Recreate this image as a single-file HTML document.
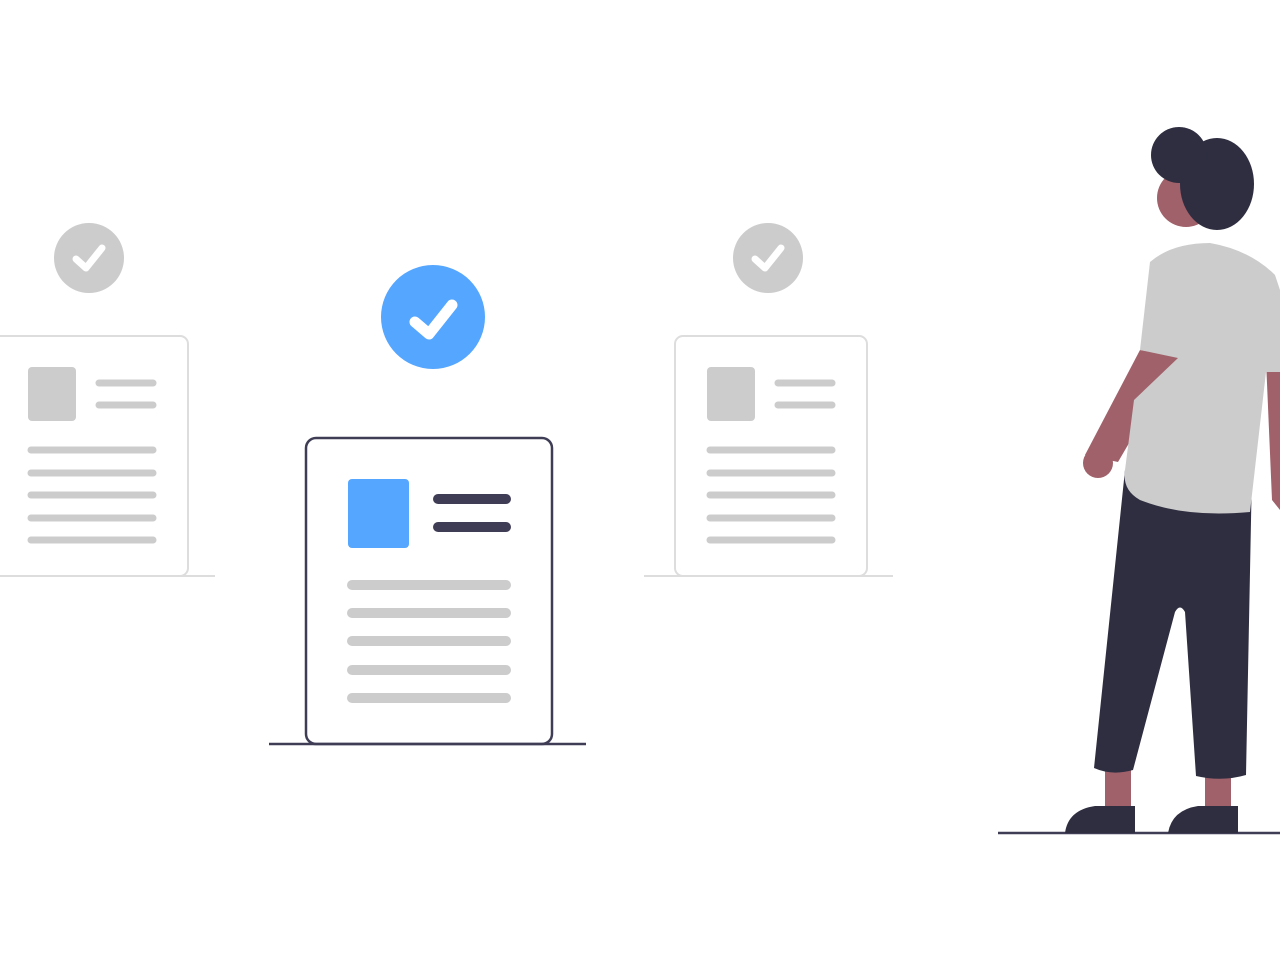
<!DOCTYPE html>
<html><head><meta charset="utf-8"><style>html,body{margin:0;padding:0;background:#fff;}svg{display:block}</style></head>
<body>
<svg width="1280" height="964" viewBox="0 0 1280 964" xmlns="http://www.w3.org/2000/svg">
<rect width="1280" height="964" fill="#fff"/>
<g>
<circle cx="89" cy="258" r="35" fill="#cccccc"/>
<path d="M76 259 L86 268 L102 248" stroke="#fff" stroke-width="7" fill="none" stroke-linecap="round" stroke-linejoin="round"/>
<rect x="-10" y="336" width="198" height="240" rx="8" fill="#fff" stroke="#dddddd" stroke-width="2"/>
<line x1="0" y1="576" x2="215" y2="576" stroke="#dddddd" stroke-width="2"/>
<rect x="28" y="367" width="48" height="54" rx="4" fill="#cccccc"/>
<g stroke="#cccccc" stroke-width="7" stroke-linecap="round">
<line x1="99" y1="383" x2="153" y2="383"/><line x1="99" y1="405" x2="153" y2="405"/>
<line x1="31" y1="450" x2="153" y2="450"/><line x1="31" y1="473" x2="153" y2="473"/><line x1="31" y1="495" x2="153" y2="495"/><line x1="31" y1="518" x2="153" y2="518"/><line x1="31" y1="540" x2="153" y2="540"/>
</g>
</g>
<g transform="translate(679,0)">
<circle cx="89" cy="258" r="35" fill="#cccccc"/>
<path d="M76 259 L86 268 L102 248" stroke="#fff" stroke-width="7" fill="none" stroke-linecap="round" stroke-linejoin="round"/>
<rect x="-4" y="336" width="192" height="240" rx="8" fill="#fff" stroke="#dddddd" stroke-width="2"/>
<line x1="-35" y1="576" x2="214" y2="576" stroke="#dddddd" stroke-width="2"/>
<rect x="28" y="367" width="48" height="54" rx="4" fill="#cccccc"/>
<g stroke="#cccccc" stroke-width="7" stroke-linecap="round">
<line x1="99" y1="383" x2="153" y2="383"/><line x1="99" y1="405" x2="153" y2="405"/>
<line x1="31" y1="450" x2="153" y2="450"/><line x1="31" y1="473" x2="153" y2="473"/><line x1="31" y1="495" x2="153" y2="495"/><line x1="31" y1="518" x2="153" y2="518"/><line x1="31" y1="540" x2="153" y2="540"/>
</g>
</g>
<circle cx="433" cy="317" r="52" fill="#54a6ff"/>
<path d="M415 322 L429 334 L452 305" stroke="#fff" stroke-width="11" fill="none" stroke-linecap="round" stroke-linejoin="round"/>
<rect x="306" y="438" width="246" height="306" rx="10" fill="#fff" stroke="#3f3d56" stroke-width="2.5"/>
<line x1="269" y1="744" x2="586" y2="744" stroke="#3f3d56" stroke-width="2.5"/>
<rect x="348" y="479" width="61" height="69" rx="4" fill="#54a6ff"/>
<g stroke="#3f3d56" stroke-width="10" stroke-linecap="round">
<line x1="438" y1="499" x2="506" y2="499"/><line x1="438" y1="527" x2="506" y2="527"/>
</g>
<g stroke="#cccccc" stroke-width="10" stroke-linecap="round">
<line x1="352" y1="585" x2="506" y2="585"/><line x1="352" y1="613" x2="506" y2="613"/><line x1="352" y1="641" x2="506" y2="641"/><line x1="352" y1="670" x2="506" y2="670"/><line x1="352" y1="698" x2="506" y2="698"/>
</g>
<line x1="998" y1="833" x2="1280" y2="833" stroke="#3f3d56" stroke-width="2.5"/>
<path d="M1266 360 L1280 360 L1280 510 L1272 500 Z" fill="#a0616a"/>
<path d="M1140 350 L1180 356 L1118 462 L1085 455 Z" fill="#a0616a"/>
<circle cx="1098" cy="463" r="15" fill="#a0616a"/>
<rect x="1105" y="765" width="26" height="45" fill="#a0616a"/>
<rect x="1205" y="770" width="26" height="40" fill="#a0616a"/>
<path d="M1065 833 Q1068 810 1095 806 L1135 806 L1135 833 Z" fill="#2f2e41"/>
<path d="M1168 833 Q1172 810 1198 806 L1238 806 L1238 833 Z" fill="#2f2e41"/>
<path d="M1125 470 L1252 470 L1246 775 Q1222 782 1196 776 L1185 612 Q1180 603 1175 612 L1133 770 Q1112 776 1094 768 Z" fill="#2f2e41"/>
<path d="M1150 262 Q1172 243 1210 243 Q1250 250 1275 275 L1280 290 L1280 372 L1266 372 L1250 512 Q1185 518 1140 500 Q1122 490 1125 470 L1134 400 L1178 358 L1140 350 Z" fill="#cccccc"/>
<circle cx="1186" cy="198" r="29" fill="#a0616a"/>
<ellipse cx="1217" cy="184" rx="37" ry="46" fill="#2f2e41"/>
<circle cx="1179" cy="155" r="28" fill="#2f2e41"/>
</svg>
</body></html>
